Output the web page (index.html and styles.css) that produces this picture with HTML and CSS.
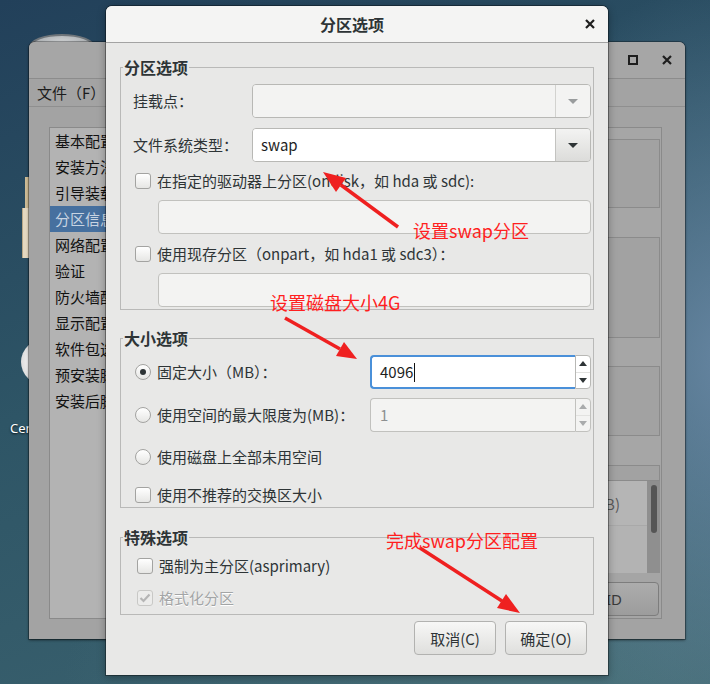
FILE: index.html
```html
<!DOCTYPE html>
<html lang="zh-CN">
<head>
<meta charset="utf-8">
<title>分区选项</title>
<link rel="stylesheet" href="styles.css">
</head>
<body>
<div class="desktop">
  <div class="dicon disk"></div>
  <div class="dicon file-a"></div>
  <div class="dicon file-b"></div>
  <div class="dicon cd"></div>
  <div class="dicon-label">CentOS 7 x86_64</div>

  <div class="bgwin">
    <div class="bg-title">
      <span class="wbtn"><svg width="16" height="16" viewBox="0 0 16 16"><rect x="4" y="4" width="8" height="8" fill="none" stroke="#1e1e1e" stroke-width="2"/></svg></span>
      <span class="wbtn"><svg width="16" height="16" viewBox="0 0 16 16"><path d="M4 4 L12 12 M12 4 L4 12" stroke="#1e1e1e" stroke-width="2.2"/></svg></span>
    </div>
    <div class="bg-menu">文件（F）</div>
    <div class="bg-body">
      <ul class="bg-list">
        <li>基本配置</li>
        <li>安装方法</li>
        <li>引导装载程序选项</li>
        <li class="is-sel">分区信息</li>
        <li>网络配置</li>
        <li>验证</li>
        <li>防火墙配置</li>
        <li>显示配置</li>
        <li>软件包选择</li>
        <li>预安装脚本</li>
        <li>安装后脚本</li>
      </ul>
      <div class="bg-panel">
        <div class="bp-strip h11"></div>
        <div class="bp-box h69"></div>
        <div class="bp-strip h29"></div>
        <div class="bp-box h101"></div>
        <div class="bp-strip h28"></div>
        <div class="bp-box h70"></div>
        <div class="bp-strip h29"></div>
        <div class="bp-box h16"></div>
        <div class="bp-list">
          <div class="bp-rows">
            <div class="bp-row">大小(MB)</div>
            <div class="bp-row2"></div>
          </div>
          <div class="bp-scroll"><span class="bp-thumb"></span></div>
        </div>
        <div class="bp-btnrow"><span class="bp-btn">RAID</span></div>
      </div>
    </div>
  </div>

  <div class="dialog">
    <div class="dlg-title">
      <span></span>
      <span class="dlg-title-text">分区选项</span>
      <span class="dlg-close"><svg width="16" height="16" viewBox="0 0 16 16"><path d="M4 4 L12 12 M12 4 L4 12" stroke="#1e1e1e" stroke-width="2.2"/></svg></span>
    </div>
    <div class="dlg-body">
      <fieldset class="group g1">
        <legend>分区选项</legend>
        <div class="group-body">
          <div class="form-row">
            <span class="lbl">挂载点：</span>
            <div class="combo is-disabled"><div class="combo-field"></div><div class="combo-btn"><i class="tri tri-down"></i></div></div>
          </div>
          <div class="form-row mt10">
            <span class="lbl">文件系统类型：</span>
            <div class="combo"><div class="combo-field">swap</div><div class="combo-btn"><i class="tri tri-down"></i></div></div>
          </div>
          <label class="opt h38"><span class="checkbox"></span><span>在指定的驱动器上分区(ondisk，如 hda 或 sdc):</span></label>
          <div class="entry is-disabled"></div>
          <label class="opt h39"><span class="checkbox"></span><span>使用现存分区（onpart，如 hda1 或 sdc3）：</span></label>
          <div class="entry is-disabled"></div>
        </div>
      </fieldset>

      <fieldset class="group g2">
        <legend>大小选项</legend>
        <div class="group-body">
          <div class="size-row">
            <label class="opt"><span class="radio is-on"></span><span>固定大小（MB）：</span></label>
            <div class="spin is-focus">
              <div class="spin-field">4096<span class="caret"></span></div>
              <div class="spin-btns"><span class="sb"><i class="tri tri-up"></i></span><span class="sb"><i class="tri tri-dn"></i></span></div>
            </div>
          </div>
          <div class="size-row mt9">
            <label class="opt"><span class="radio"></span><span>使用空间的最大限度为(MB)：</span></label>
            <div class="spin is-disabled">
              <div class="spin-field">1</div>
              <div class="spin-btns"><span class="sb"><i class="tri tri-up"></i></span><span class="sb"><i class="tri tri-dn"></i></span></div>
            </div>
          </div>
          <label class="opt h50"><span class="radio"></span><span>使用磁盘上全部未用空间</span></label>
          <label class="opt h25"><span class="checkbox"></span><span>使用不推荐的交换区大小</span></label>
        </div>
      </fieldset>

      <fieldset class="group g3">
        <legend>特殊选项</legend>
        <div class="group-body">
          <label class="opt h32"><span class="checkbox"></span><span>强制为主分区(asprimary)</span></label>
          <label class="opt h32 is-disabled"><span class="checkbox is-checked"><svg width="14" height="14" viewBox="0 0 14 14"><path d="M2.5 7 L5.5 10 L11.5 3.5" fill="none" stroke="#b5b5b5" stroke-width="2.2"/></svg></span><span>格式化分区</span></label>
        </div>
      </fieldset>

      <div class="actions">
        <button class="btn" type="button">取消(C)</button>
        <button class="btn" type="button">确定(O)</button>
      </div>
    </div>
  </div>

  <svg class="arrows" width="710" height="684" viewBox="0 0 710 684">
    <g fill="#ef2020" stroke="#ef2020">
      <line x1="398" y1="227" x2="341" y2="185" stroke-width="3.5"/>
      <polygon points="323,172 346,178 336,192" stroke="none"/>
      <line x1="285" y1="318" x2="340" y2="349" stroke-width="3.5"/>
      <polygon points="357,359 336,356 344,342" stroke="none"/>
      <line x1="420" y1="548" x2="502" y2="601" stroke-width="3.5"/>
      <polygon points="520,613 497,608 506,594" stroke="none"/>
    </g>
  </svg>
  <div class="note n1">设置swap分区</div>
  <div class="note n2">设置磁盘大小4G</div>
  <div class="note n3">完成swap分区配置</div>
</div>
</body>
</html>
```

FILE: styles.css
```css
* { box-sizing: border-box; }

body {
  margin: 0;
  font-family: "Noto Sans CJK SC", "Noto Sans", sans-serif;
  color: #2e3436;
}

.desktop {
  position: relative;
  width: 710px;
  height: 684px;
  overflow: hidden;
  background:
    radial-gradient(ellipse 260px 380px at 730px 360px, rgba(110,140,170,0.85) 0%, rgba(110,140,170,0) 100%),
    radial-gradient(ellipse 500px 300px at 560px 700px, rgba(80,120,128,0.7) 0%, rgba(80,120,128,0) 100%),
    linear-gradient(160deg, #22405a 0%, #2e5566 45%, #3d6470 100%);
}

/* desktop icons */
.dicon { position: absolute; }
.disk {
  left: 29px; top: 34px; width: 66px; height: 26px;
  border-radius: 50%;
  border: 2px solid #6f757a;
  background: radial-gradient(ellipse at 50% 40%, #d8dadc 0%, #a9adb0 70%, #7f8488 100%);
}
.file-a { left: 25px; top: 177px; width: 6px; height: 34px; background: #cdbb95; }
.file-b { left: 22px; top: 208px; width: 9px; height: 50px; background: #e4d8c0; border-left: 1px solid #b8a888; }
.cd {
  left: 21px; top: 339px; width: 48px; height: 46px;
  border-radius: 50%;
  background: radial-gradient(circle at 60% 50%, #ffffff 0%, #f2f2f2 55%, #c9c9c9 100%);
}
.dicon-label {
  position: absolute; left: 10px; top: 419px;
  font-family: "Noto Sans", sans-serif; font-size: 13px; line-height: 18px;
  color: #fff; text-shadow: 0 1px 2px rgba(0,0,0,0.8);
}

/* background (parent) window */
.bgwin {
  position: absolute;
  left: 29px; top: 42px;
  width: 656px; height: 597px;
  background: #a3a3a3;
  border-radius: 6px 6px 0 0;
  box-shadow: 0 1px 3px rgba(0,0,0,0.6), 0 0 0 1px rgba(0,0,0,0.25);
  display: flex;
  flex-direction: column;
}
.bg-title {
  height: 37px;
  border-bottom: 1px solid #8c8c8c;
  background: #a6a6a6;
  border-radius: 6px 6px 0 0;
  display: flex;
  justify-content: flex-end;
  align-items: center;
  gap: 18px;
  padding-right: 10px;
}
.wbtn { width: 16px; height: 16px; display: block; }
.wbtn svg { display: block; }
.bg-menu {
  height: 28px;
  border-bottom: 1px solid #8f8f8f;
  padding-left: 8px;
  font-size: 15px;
  line-height: 27px;
  color: #1c1c1c;
}
.bg-body {
  flex: 1;
  display: flex;
  gap: 12px;
  padding: 20px 23px 20px 20px;
}
.bg-list {
  margin: 0;
  padding: 0;
  list-style: none;
  width: 240px;
  background: #b3b3b3;
  border: 1px solid #8a8a8a;
}
.bg-list li {
  height: 26px;
  line-height: 26px;
  padding-left: 5px;
  font-size: 15px;
  color: #111;
  white-space: nowrap;
}
.bg-list li.is-sel { background: #46709f; color: #c8d4e2; }

.bg-panel {
  flex: 1;
  border: 1px solid #8a8a8a;
  display: flex;
  flex-direction: column;
  background: #a5a5a5;
}
.bp-strip { background: #a6a6a6; }
.bp-box { background: #a2a2a2; border: 1px solid #8b8b8b; margin-right: 1px; }
.h11 { height: 11px; }
.h16 { height: 16px; }
.h28 { height: 28px; }
.h29 { height: 29px; }
.h69 { height: 69px; }
.h70 { height: 70px; }
.h101 { height: 101px; }
.bp-list {
  height: 92px;
  display: flex;
  margin-right: 1px;
}
.bp-rows { flex: 1; display: flex; flex-direction: column; background: #b3b3b3; }
.bp-row {
  height: 45px;
  border-bottom: 1px solid #a9a9a9;
  background: #b5b5b5;
  display: flex; align-items: center; justify-content: flex-end;
  padding-right: 27px;
  font-size: 15px; color: #5a5a5a;
}
.bp-row2 { flex: 1; }
.bp-scroll {
  width: 13px;
  background: #8f8f8f;
  display: flex; justify-content: center;
  padding-top: 4px;
}
.bp-thumb { width: 6px; height: 48px; border-radius: 3px; background: #555; }
.bp-btnrow {
  margin-top: 9px;
  height: 36px;
  padding-bottom: 2px;
  padding-right: 2px;
  display: flex;
}
.bp-btn {
  flex: 1;
  border: 1px solid #7d7d7d;
  border-radius: 4px;
  background: linear-gradient(#acacac, #9c9c9c);
  display: flex; align-items: center; justify-content: flex-end;
  padding-right: 36px;
  font-family: "Noto Sans", sans-serif;
  font-size: 15px; color: #3a3a3a;
}

/* dialog */
.dialog {
  position: absolute;
  left: 106px; top: 6px;
  width: 502px; height: 669px;
  background: #e8e8e7;
  border-radius: 6px 6px 0 0;
  box-shadow: 0 0 0 1px rgba(0,0,0,0.35), 0 2px 8px rgba(0,0,0,0.35);
  display: flex;
  flex-direction: column;
}
.dlg-title {
  height: 37px;
  background: #f4f4f3;
  border-bottom: 1px solid #a3a3a3;
  border-radius: 6px 6px 0 0;
  display: grid;
  grid-template-columns: 1fr auto 1fr;
  align-items: center;
  padding-right: 10px;
}
.dlg-title-text {
  font-size: 16px;
  font-weight: bold;
  line-height: 20px;
  color: #2e3436;
}
.dlg-close { justify-self: end; width: 16px; height: 16px; }
.dlg-close svg { display: block; }

.dlg-body {
  padding: 15px 14px 0 14px;
}

.group {
  margin: 0;
  padding: 0;
  border: 1px solid #b9b9b8;
  min-width: 0;
}
.group legend {
  margin-left: 2px;
  padding: 0 1px;
  font-size: 16px;
  font-weight: bold;
  line-height: 18px;
  color: #2e3436;
}
.group-body {
  padding: 8px 2px 2px 12px;
  display: flex;
  flex-direction: column;
}
.g2 { margin-top: 19px; }
.g2 .group-body { padding-bottom: 0; }
.g3 { margin-top: 20px; }
.g3 .group-body { padding-top: 4px; padding-bottom: 0; }
.g3 .opt { margin-left: 4px; }

.form-row {
  display: grid;
  grid-template-columns: 119px 1fr;
  align-items: center;
  height: 34px;
}
.mt10 { margin-top: 10px; }
.mt9 { margin-top: 9px; }
.lbl { font-size: 15px; line-height: 18px; white-space: nowrap; }

.combo {
  display: flex;
  height: 34px;
  border: 1px solid #b8b8b5;
  border-radius: 4px;
  overflow: hidden;
}
.combo-field {
  flex: 1;
  background: #fff;
  padding-left: 8px;
  font-size: 15px;
  line-height: 32px;
  color: #1e1e1e;
}
.combo-btn {
  width: 35px;
  border-left: 1px solid #c3c3c0;
  background: linear-gradient(#f3f3f2, #dcdcda);
  display: flex; align-items: center; justify-content: center;
  color: #2e3436;
}
.combo.is-disabled .combo-field { background: #f3f3f2; }
.combo.is-disabled .combo-btn { background: #f3f3f2; border-left-color: #d2d2cf; color: #999c9d; }

.tri {
  display: block;
  width: 0; height: 0;
  border-left: 5px solid transparent;
  border-right: 5px solid transparent;
}
.tri-down { border-top: 5px solid currentColor; }
.tri-up { border-left-width: 4px; border-right-width: 4px; border-bottom: 5px solid currentColor; }
.tri-dn { border-left-width: 4px; border-right-width: 4px; border-top: 5px solid currentColor; }

.entry {
  height: 34px;
  margin-left: 25px;
  border: 1px solid #c1c1be;
  border-radius: 4px;
  background: #f3f3f2;
}

.opt {
  display: flex;
  align-items: center;
  gap: 6px;
  margin-left: 2px;
  font-size: 15px;
  line-height: 18px;
  white-space: nowrap;
}
.h25 { height: 25px; }
.h32 { height: 32px; }
.h38 { height: 38px; }
.h39 { height: 39px; }
.h50 { height: 50px; }

.checkbox {
  width: 16px; height: 16px;
  flex: none;
  border: 1px solid #a3a3a1;
  border-radius: 3px;
  background: linear-gradient(#ffffff, #e6e6e4);
  display: flex; align-items: center; justify-content: center;
}
.checkbox svg { display: block; }
.opt.is-disabled { color: #a3a5a6; text-shadow: 0 1px 0 #ffffff; }
.opt.is-disabled .checkbox { border-color: #c8c8c6; background: #ececeb; }

.radio {
  width: 16px; height: 16px;
  flex: none;
  border: 1px solid #a3a3a1;
  border-radius: 50%;
  background: linear-gradient(#ffffff, #e6e6e4);
  display: flex; align-items: center; justify-content: center;
}
.radio.is-on::after {
  content: "";
  width: 6px; height: 6px;
  border-radius: 50%;
  background: #2e3436;
}

.size-row {
  display: grid;
  grid-template-columns: 237px 1fr;
  align-items: center;
  height: 34px;
}
.size-row .opt { margin-left: 2px; }

.spin { display: flex; height: 34px; }
.spin-field {
  flex: 1;
  border: 1px solid #c1c1be;
  border-right: none;
  border-radius: 4px 0 0 4px;
  background: #f3f3f2;
  padding-left: 9px;
  font-size: 15px;
  line-height: 32px;
  color: #8d9091;
  display: flex; align-items: center;
}
.spin.is-focus .spin-field {
  border: 2px solid #4a90d9;
  border-right: none;
  background: #fff;
  padding-left: 8px;
  color: #1e1e1e;
}
.caret {
  display: inline-block;
  width: 1px; height: 19px;
  margin-left: 1px;
  background: #111;
}
.spin-btns {
  width: 16px;
  border: 1px solid #b8b8b5;
  border-radius: 0 4px 4px 0;
  background: #fff;
  display: flex;
  flex-direction: column;
  color: #2e3436;
}
.spin.is-disabled .spin-btns { background: #f3f3f2; border-color: #c1c1be; color: #a9abac; }
.sb {
  flex: 1;
  display: flex; align-items: center; justify-content: center;
}
.sb + .sb { border-top: 1px solid #e2e2e0; }

.actions {
  margin-top: 6px;
  padding-right: 7px;
  display: flex;
  justify-content: flex-end;
  gap: 9px;
}
.btn {
  width: 82px;
  height: 34px;
  border: 1px solid #b2b2b0;
  border-radius: 4px;
  background: linear-gradient(#f7f7f6, #dfdfdd);
  font-family: "Noto Sans CJK SC", "Noto Sans", sans-serif;
  font-size: 15px;
  color: #2e3436;
  padding: 0;
}

/* annotations */
.arrows {
  position: absolute;
  left: 0; top: 0;
  pointer-events: none;
}
.note {
  position: absolute;
  font-family: "Noto Sans CJK SC", sans-serif;
  font-size: 18px;
  line-height: 22px;
  color: #ff1f1f;
  white-space: nowrap;
}
.n1 { left: 413px; top: 219px; }
.n2 { left: 270px; top: 291px; }
.n3 { left: 386px; top: 529px; }
```
